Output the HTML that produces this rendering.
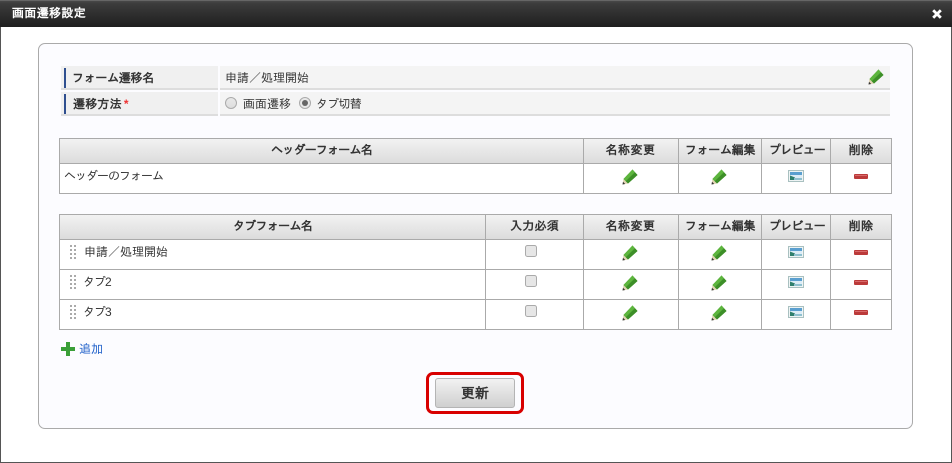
<!DOCTYPE html>
<html lang="ja"><head><meta charset="utf-8">
<style>
html,body{margin:0;padding:0;width:952px;height:463px;overflow:hidden;background:#fff}
body{position:relative;font-family:"Liberation Sans","IPAGothic","Noto Sans CJK JP",sans-serif;font-size:12px;color:#333}
.a{position:absolute;box-sizing:border-box}
.t{position:absolute;white-space:nowrap;line-height:14px}
.h{position:absolute;height:24px;line-height:23px;text-align:center;font-weight:bold;color:#333;white-space:nowrap;font-size:12px}
.ln{position:absolute;background:#aaa}
.hb{position:absolute;background:linear-gradient(#f2f2f2,#dcdcdc)}
svg{position:absolute;overflow:visible}
</style></head><body>
<div class="a" style="left:0;top:0;width:952px;height:463px;border:1px solid #555;border-top:0"></div>
<div class="a" style="left:0;top:0;width:952px;height:27px;background:linear-gradient(#484848,#3c3c3c 10%,#1e1e1e);border-top:1px solid #666"></div>
<div class="t" style="left:12px;top:6px;color:#fff;font-weight:bold;letter-spacing:.35px">画面遷移設定</div>
<svg style="left:932px;top:9px" width="10" height="10" viewBox="0 0 10 10"><path d="M1.2 1.2L8.8 8.8M8.8 1.2L1.2 8.8" stroke="#fff" stroke-width="2.8"/></svg>

<div class="a" style="left:38px;top:43px;width:875px;height:386px;border:1px solid #aaa;border-radius:7px;background:#fcfcff"></div>

<!-- form rows -->
<div class="a" style="left:61px;top:66px;width:157px;height:22px;background:#f0f0f0"></div>
<div class="a" style="left:220px;top:66px;width:670px;height:22px;background:#f4f4f4"></div>
<div class="a" style="left:61px;top:88px;width:157px;height:2px;background:#ddd"></div>
<div class="a" style="left:220px;top:88px;width:670px;height:2px;background:#ddd"></div>
<div class="a" style="left:64px;top:68px;width:2px;height:20px;background:#2f4f8f"></div>
<div class="t" style="left:72px;top:71px;font-weight:bold;letter-spacing:-.3px">フォーム遷移名</div>
<div class="t" style="left:225px;top:71px">申請／処理開始</div>

<div class="a" style="left:61px;top:92px;width:157px;height:22px;background:#f0f0f0"></div>
<div class="a" style="left:220px;top:92px;width:670px;height:22px;background:#f4f4f4"></div>
<div class="a" style="left:61px;top:114px;width:157px;height:2px;background:#ddd"></div>
<div class="a" style="left:220px;top:114px;width:670px;height:2px;background:#ddd"></div>
<div class="a" style="left:64px;top:94px;width:2px;height:20px;background:#2f4f8f"></div>
<div class="t" style="left:73px;top:97px;font-weight:bold;letter-spacing:.2px">遷移方法<span style="color:#e33;margin-left:2px">*</span></div>
<div class="a" style="left:225px;top:97px;width:12px;height:12px;border:1px solid #aaa;border-radius:50%;background:linear-gradient(#e8e8e8,#ddd)"></div>
<div class="t" style="left:243px;top:97px">画面遷移</div>
<div class="a" style="left:299px;top:97px;width:12px;height:12px;border:1px solid #aaa;border-radius:50%;background:#e8e8e8"></div>
<div class="a" style="left:302px;top:100px;width:6px;height:6px;border-radius:50%;background:#666"></div>
<div class="t" style="left:316px;top:97px;letter-spacing:-.8px">タブ切替</div>

<!-- table 1 -->
<div class="a" style="left:59px;top:138px;width:833px;height:56px;background:#fff;border:1px solid #aaa"></div>
<div class="hb" style="left:60px;top:139px;width:831px;height:24px"></div>
<div class="ln" style="left:60px;top:163px;width:831px;height:1px"></div>
<div class="ln" style="left:583px;top:139px;width:1px;height:54px"></div>
<div class="ln" style="left:678px;top:139px;width:1px;height:54px"></div>
<div class="ln" style="left:761px;top:139px;width:1px;height:54px"></div>
<div class="ln" style="left:830px;top:139px;width:1px;height:54px"></div>
<div class="h" style="left:60px;top:139px;width:523px;letter-spacing:-.8px">ヘッダーフォーム名</div>
<div class="h" style="left:584px;top:139px;width:94px;letter-spacing:.5px;text-indent:-1px">名称変更</div>
<div class="h" style="left:679px;top:139px;width:82px;letter-spacing:-.3px">フォーム編集</div>
<div class="h" style="left:762px;top:139px;width:68px;letter-spacing:-.8px;text-indent:2px">プレビュー</div>
<div class="h" style="left:831px;top:139px;width:60px;letter-spacing:.4px">削除</div>
<div class="t" style="left:64px;top:169px;letter-spacing:-1px">ヘッダーのフォーム</div>

<!-- table 2 -->
<div class="a" style="left:59px;top:214px;width:833px;height:116px;background:#fff;border:1px solid #aaa"></div>
<div class="hb" style="left:60px;top:215px;width:831px;height:24px"></div>
<div class="ln" style="left:60px;top:239px;width:831px;height:1px"></div>
<div class="ln" style="left:60px;top:269px;width:831px;height:1px"></div>
<div class="ln" style="left:60px;top:299px;width:831px;height:1px"></div>
<div class="ln" style="left:485px;top:215px;width:1px;height:114px"></div>
<div class="ln" style="left:583px;top:215px;width:1px;height:114px"></div>
<div class="ln" style="left:678px;top:215px;width:1px;height:114px"></div>
<div class="ln" style="left:761px;top:215px;width:1px;height:114px"></div>
<div class="ln" style="left:830px;top:215px;width:1px;height:114px"></div>
<div class="h" style="left:60px;top:215px;width:425px;letter-spacing:-.7px">タブフォーム名</div>
<div class="h" style="left:486px;top:215px;width:97px;letter-spacing:.2px">入力必須</div>
<div class="h" style="left:584px;top:215px;width:94px;letter-spacing:.5px;text-indent:-1px">名称変更</div>
<div class="h" style="left:679px;top:215px;width:82px;letter-spacing:-.3px">フォーム編集</div>
<div class="h" style="left:762px;top:215px;width:68px;letter-spacing:-.8px;text-indent:2px">プレビュー</div>
<div class="h" style="left:831px;top:215px;width:60px;letter-spacing:.4px">削除</div>
<div class="t" style="left:84px;top:245px">申請／処理開始</div>
<div class="t" style="left:83px;top:275px;letter-spacing:-1px">タブ2</div>
<div class="t" style="left:83px;top:305px;letter-spacing:-1px">タブ3</div>

<svg width="0" height="0" style="left:0;top:0"><defs>
<g id="p"><path d="M.5 15.5L1.5 10L6 14.5Z" fill="#e2d4b4"/><path d="M.5 15.5L1 12.8L3.2 15Z" fill="#333"/><path d="M1.5 10L10.5 .5L15.5 6L6 14.5Z" fill="#479f2c"/><path d="M1.5 10L10.5 .5L13 3.2L3.8 12.3Z" fill="#5db53e"/><path d="M13 3.2L15.5 6L6 14.5L3.8 12.3Z" fill="#3d8f28"/></g>
<g id="i"><rect x=".5" y=".5" width="15" height="11" fill="#eef4f4" stroke="#a9c0c0"/><rect x="2" y="2" width="12" height="8" fill="#dcecf6"/><rect x="2" y="2" width="12" height="3" fill="#5a9fd0"/><path d="M2 5.5L7 7.5L6 10H2Z" fill="#2f7f6c"/><rect x="6" y="8" width="8" height="2" fill="#8fc0cf"/></g>
<g id="m"><rect x="0" y="0" width="14" height="5" rx="1" fill="#bb3a3a"/><rect x="1" y="1" width="12" height="1" fill="#d96a6a"/></g>
<g id="d" fill="#aaa"><rect x="0" y="0" width="2" height="2"/><rect x="4" y="0" width="2" height="2"/><rect x="0" y="4" width="2" height="2"/><rect x="4" y="4" width="2" height="2"/><rect x="0" y="8" width="2" height="2"/><rect x="4" y="8" width="2" height="2"/><rect x="0" y="12" width="2" height="2"/><rect x="4" y="12" width="2" height="2"/></g>
<g id="c"><rect x=".5" y=".5" width="11" height="11" rx="2" fill="#e6e6e6" stroke="#aaa"/></g>
</defs></svg>

<svg style="left:868px;top:69px" width="16" height="16"><use href="#p"/></svg>
<svg style="left:622px;top:169px" width="16" height="16"><use href="#p"/></svg>
<svg style="left:711px;top:169px" width="16" height="16"><use href="#p"/></svg>
<svg style="left:788px;top:170px" width="16" height="12"><use href="#i"/></svg>
<svg style="left:854px;top:174px" width="14" height="5"><use href="#m"/></svg>

<svg style="left:622px;top:245px" width="16" height="16"><use href="#p"/></svg>
<svg style="left:711px;top:245px" width="16" height="16"><use href="#p"/></svg>
<svg style="left:788px;top:246px" width="16" height="12"><use href="#i"/></svg>
<svg style="left:854px;top:250px" width="14" height="5"><use href="#m"/></svg>
<svg style="left:622px;top:275px" width="16" height="16"><use href="#p"/></svg>
<svg style="left:711px;top:275px" width="16" height="16"><use href="#p"/></svg>
<svg style="left:788px;top:276px" width="16" height="12"><use href="#i"/></svg>
<svg style="left:854px;top:280px" width="14" height="5"><use href="#m"/></svg>
<svg style="left:622px;top:305px" width="16" height="16"><use href="#p"/></svg>
<svg style="left:711px;top:305px" width="16" height="16"><use href="#p"/></svg>
<svg style="left:788px;top:306px" width="16" height="12"><use href="#i"/></svg>
<svg style="left:854px;top:310px" width="14" height="5"><use href="#m"/></svg>

<svg style="left:70px;top:245px" width="6" height="14"><use href="#d"/></svg>
<svg style="left:70px;top:275px" width="6" height="14"><use href="#d"/></svg>
<svg style="left:70px;top:305px" width="6" height="14"><use href="#d"/></svg>
<svg style="left:525px;top:245px" width="12" height="12"><use href="#c"/></svg>
<svg style="left:525px;top:275px" width="12" height="12"><use href="#c"/></svg>
<svg style="left:525px;top:305px" width="12" height="12"><use href="#c"/></svg>

<svg style="left:61px;top:342px" width="14" height="14" viewBox="0 0 14 14"><path d="M5 0H9V5H14V9H9V14H5V9H0V5H5Z" fill="#3a9f38"/></svg>
<div class="t" style="left:79px;top:342px;color:#1a5cc8">追加</div>

<div class="a" style="left:426px;top:372px;width:98px;height:42px;border:3px solid #d80000;border-radius:7px"></div>
<div class="a" style="left:435px;top:378px;width:80px;height:30px;border:1px solid #b4b4b4;border-radius:3px;background:linear-gradient(#f2f2f2,#cfcfcf)"></div>
<div class="t" style="left:435px;top:386px;width:80px;text-align:center;font-weight:bold;font-size:14px;color:#333">更新</div>
</body></html>
